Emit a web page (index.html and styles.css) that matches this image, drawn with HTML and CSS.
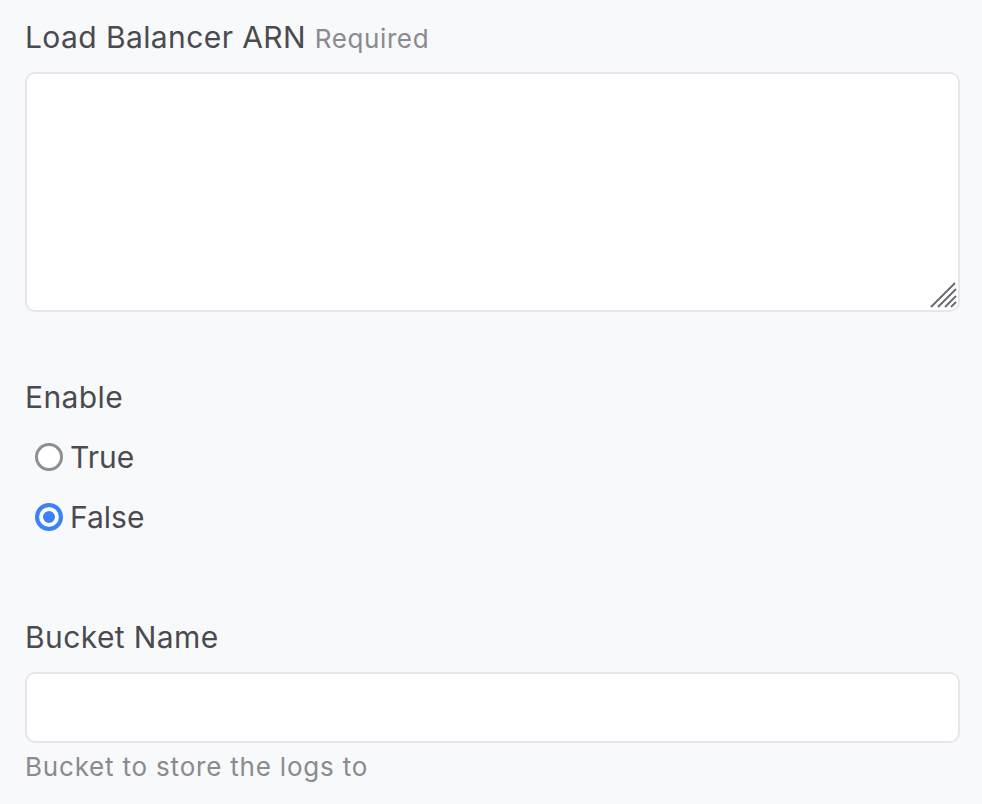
FILE: index.html
```html
<!DOCTYPE html>
<html>
<head>
<meta charset="utf-8">
<link rel="stylesheet" href="styles.css">
</head>
<body>
<form class="form">
  <div class="field">
    <label class="label">Load Balancer ARN <span class="req">Required</span></label>
    <div class="textarea-wrap">
      <textarea class="textarea"></textarea>
      <svg class="grip" width="30" height="30" viewBox="0 0 30 30" aria-hidden="true">
        <g stroke="#6b6b6f" stroke-width="2" stroke-linecap="butt">
          <line x1="4" y1="29" x2="28" y2="5"/>
          <line x1="11" y1="29" x2="29" y2="11"/>
          <line x1="18" y1="29" x2="29" y2="18"/>
          <line x1="24" y1="29" x2="29" y2="24"/>
        </g>
      </svg>
    </div>
  </div>
  <div class="field field-enable">
    <div class="label">Enable</div>
    <div class="radios">
      <label class="radio"><span class="dot"></span><span>True</span></label>
      <label class="radio checked"><span class="dot"></span><span>False</span></label>
    </div>
  </div>
  <div class="field field-bucket">
    <label class="label">Bucket Name</label>
    <input class="input" type="text">
    <div class="help">Bucket to store the logs to</div>
  </div>
</form>
</body>
</html>
```
FILE: styles.css
```css
html, body {
  margin: 0;
  padding: 0;
  background: #f8f9fb;
}
body {
  font-family: Inter, "Noto Sans", sans-serif;
  color: #4a4a4f;
}
.form {
  padding: 17px 22px 0 25px;
  display: flex;
  flex-direction: column;
}
.label {
  display: block;
  font-size: 30px;
  line-height: 40px;
  letter-spacing: 0.4px;
  color: #4a4a4f;
}
.req {
  font-size: 26px;
  letter-spacing: 0.6px;
  color: #8a8a8f;
}
.textarea-wrap {
  margin-top: 13px;
  position: relative;
}
.textarea {
  display: block;
  box-sizing: border-box;
  width: 100%;
  height: 240px;
  background: #fff;
  border: 2px solid #e6e6eb;
  border-radius: 10px;
  resize: none;
  outline: none;
  margin: 0;
}
.grip {
  position: absolute;
  right: 3px;
  bottom: 4px;
}
.field-enable {
  margin-top: 65px;
}
.radios {
  margin-top: 10px;
  padding-left: 10px;
}
.radio {
  display: flex;
  align-items: center;
  height: 60px;
  font-size: 30px;
  color: #4a4a4f;
  gap: 7px;
}
.dot {
  box-sizing: border-box;
  width: 28px;
  height: 28px;
  border-radius: 50%;
  border: 3px solid #8e8e93;
  background: #fff;
  flex: none;
}
.radio.checked .dot {
  border: 4px solid #3b82f6;
  background: #fff;
  box-shadow: inset 0 0 0 4px #fff, inset 0 0 0 14px #3b82f6;
}
.field-bucket {
  margin-top: 70px;
}
.input {
  display: block;
  box-sizing: border-box;
  width: 100%;
  height: 71px;
  margin: 15px 0 0;
  background: #fff;
  border: 2px solid #e6e6eb;
  border-radius: 10px;
  outline: none;
}
.help {
  margin-top: 8px;
  font-size: 26px;
  line-height: 32px;
  letter-spacing: 0.8px;
  color: #8a8a8f;
}
```
